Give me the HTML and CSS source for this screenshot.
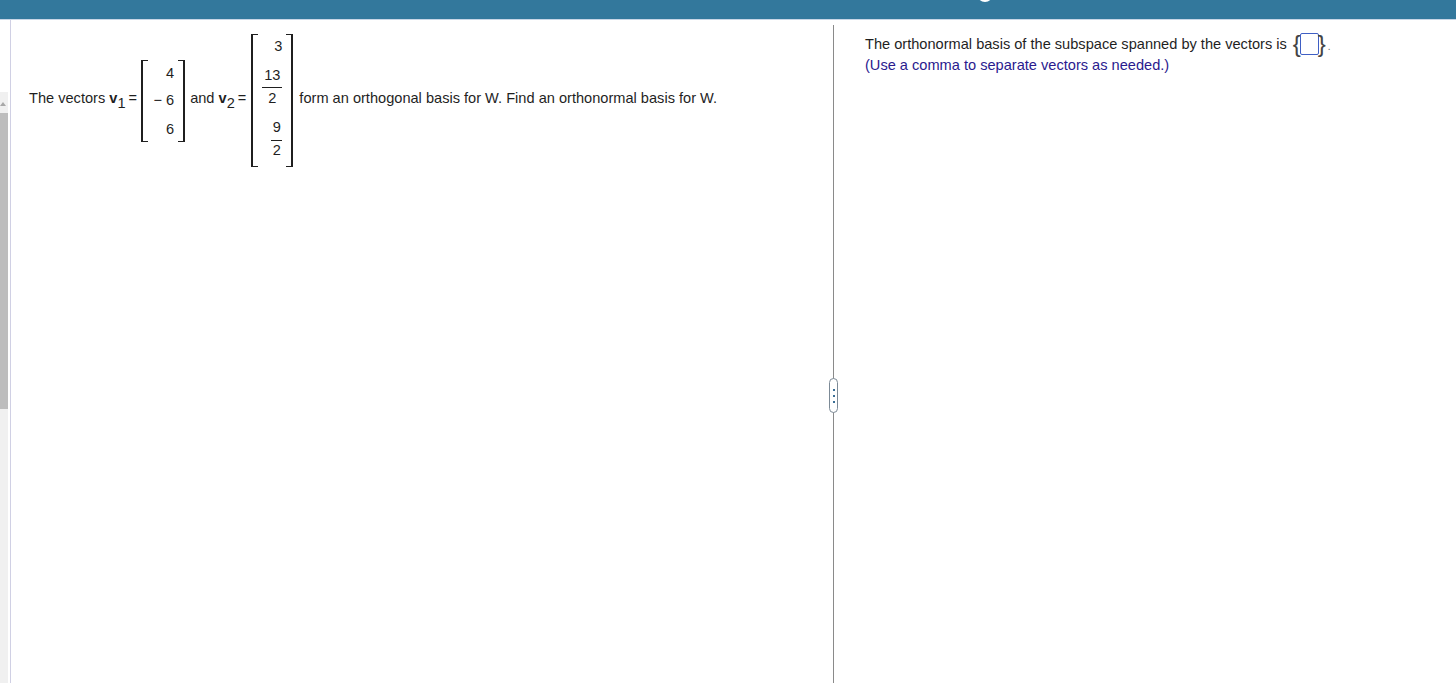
FILE: index.html
```html
<!DOCTYPE html>
<html lang="en">
<head>
<meta charset="utf-8">
<title>Orthonormal basis</title>
<link rel="stylesheet" href="styles.css">
</head>
<body>
<header class="topbar"><span class="top-arc"></span></header>
<div class="workspace">
  <aside class="gutter">
    <div class="track">
      <span class="arrow"></span>
      <div class="thumb"></div>
    </div>
  </aside>
  <main class="left-pane">
    <div class="question">
      <span class="txt">The vectors <b>v</b><sub>1</sub> =</span>
      <div class="matrix m1">
        <div class="cell">4</div>
        <div class="cell">&minus; 6</div>
        <div class="cell">6</div>
      </div>
      <span class="txt">and <b>v</b><sub>2</sub> =</span>
      <div class="matrix m2">
        <div class="cell">3</div>
        <div class="cell"><div class="frac"><span>13</span><span class="den">2</span></div></div>
        <div class="cell"><div class="frac"><span>9</span><span class="den">2</span></div></div>
      </div>
      <span class="txt">form an orthogonal basis for W. Find an orthonormal basis for W.</span>
    </div>
  </main>
  <div class="divider"><div class="knob"><i></i><i></i><i></i></div></div>
  <section class="right-pane">
    <div class="answer"><span>The orthonormal basis of the subspace spanned by the vectors is</span><span class="set"><span class="brace">{</span><span class="box"></span><span class="brace">}</span></span><span class="dot">.</span></div>
    <div class="hint">(Use a comma to separate vectors as needed.)</div>
  </section>
</div>
</body>
</html>
```
FILE: styles.css
```css
html, body { margin: 0; height: 100%; overflow: hidden; }
body {
  background: #fff;
  color: #1f1f1f;
  font-family: "Liberation Sans", Arial, sans-serif;
  font-size: 14.6px;
  display: flex;
  flex-direction: column;
}
.topbar {
  position: relative;
  height: 19px;
  background: #33789c;
  border-bottom: 1px solid #c8d6e6;
  overflow: hidden;
  flex: none;
}
.top-arc {
  position: absolute;
  left: 977px;
  top: -14px;
  width: 12px;
  height: 12px;
  border: 2px solid #fff;
  border-radius: 50%;
  background: #33789c;
}
.workspace { flex: 1; display: flex; min-height: 0; }
.gutter {
  width: 10px;
  border-right: 1px solid #d0d0e4;
  flex: none;
  padding-top: 72px;
}
.track {
  width: 8px;
  height: 100%;
  background: #f0f0f0;
  padding-top: 21px;
  box-sizing: border-box;
  position: relative;
}
.arrow {
  position: absolute;
  left: 0;
  top: 10px;
  width: 0;
  height: 0;
  border-left: 3px solid transparent;
  border-right: 3px solid transparent;
  border-bottom: 4px solid #a8a8a8;
}
.thumb { width: 8px; height: 296px; background: #bdbdbd; }
.left-pane { width: 822px; flex: none; padding-top: 14px; box-sizing: border-box; }
.question {
  display: flex;
  align-items: center;
  height: 133px;
  padding-left: 18px;
  white-space: nowrap;
}
.txt { margin-bottom: 6px; }
sub { font-size: 14.6px; line-height: 0; vertical-align: -5px; margin-right: -1px; }
.matrix {
  position: relative;
  display: flex;
  flex-direction: column;
  align-items: flex-end;
  box-sizing: border-box;
  border-left: 2px solid #1f1f1f;
  border-right: 2px solid #1f1f1f;
}
.matrix::before, .matrix::after {
  content: "";
  position: absolute;
  top: 0;
  bottom: 0;
  width: 5px;
  border-top: 1px solid #1f1f1f;
  border-bottom: 1px solid #1f1f1f;
}
.matrix::before { left: 0; }
.matrix::after { right: 0; }
.m1 { width: 44px; height: 82px; padding-right: 9px; margin: 0 5px 0 4px; }
.m2 { width: 42px; height: 133px; padding-right: 9px; margin: 0 6px 0 5px; }
.cell { text-align: right; }
.m1 .cell { height: 27px; line-height: 27px; }
.m1 .cell:nth-child(2) { margin-bottom: 2px; }
.m2 .cell:first-child { height: 24px; line-height: 24px; }
.frac {
  display: flex;
  flex-direction: column;
  align-items: center;
  min-width: 11px;
}
.m2 .cell:nth-child(2) .frac { width: 20px; padding-top: 8px; }
.m2 .cell:nth-child(3) .frac { padding-top: 10px; }
.frac span { line-height: 18px; }
.frac .den { border-top: 1px solid #1f1f1f; align-self: stretch; text-align: center; }
.m2 .cell:nth-child(2) .den { margin-top: 3px; line-height: 20px; }
.m2 .cell:nth-child(3) .den { margin-top: 4px; line-height: 18px; }
.divider {
  position: relative;
  width: 1px;
  margin-top: 5px;
  background: #8a8a8a;
  flex: none;
}
.knob {
  position: absolute;
  left: -4px;
  top: 353px;
  width: 7px;
  height: 33px;
  border: 1px solid #7c8a96;
  border-radius: 5px;
  background: #fff;
  display: flex;
  flex-direction: column;
  align-items: center;
  justify-content: center;
  gap: 4px;
}
.knob i { width: 2px; height: 2px; background: #3b6f96; }
.right-pane { flex: 1; padding: 13px 0 0 31px; }
.answer { display: flex; align-items: center; height: 22px; white-space: nowrap; }
.set { display: inline-flex; align-items: center; margin-left: 7px; }
.brace {
  font-size: 24px;
  line-height: 22px;
  height: 22px;
  color: #444;
  width: 6px;
  display: flex;
  justify-content: center;
  align-items: center;
}
.box {
  width: 19px;
  height: 22px;
  box-sizing: border-box;
  border: 1px solid #3f5fc4;
  border-radius: 2px;
  background: #fff;
}
.dot { margin-left: 3px; color: #666; font-size: 10px; padding-top: 5px; }
.hint { color: #2a1a8e; height: 21px; line-height: 21px; }
```
